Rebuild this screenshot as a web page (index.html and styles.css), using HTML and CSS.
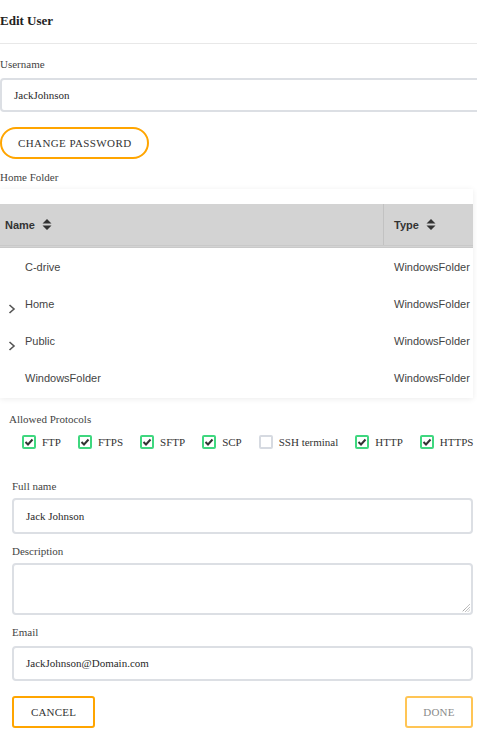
FILE: index.html
```html
<!DOCTYPE html>
<html>
<head>
<meta charset="utf-8">
<link rel="stylesheet" href="styles.css">
</head>
<body>
<div class="dialog">
  <h1 class="title">Edit User</h1>
  <div class="divider"></div>

  <div class="label label-top">Username</div>
  <div class="input input-wide">JackJohnson</div>

  <button class="btn-pill">CHANGE PASSWORD</button>

  <div class="label label-home">Home Folder</div>

  <div class="table-card">
    <div class="thead">
      <div class="th th-name">Name <svg class="sort" width="10" height="11" viewBox="0 0 10 11"><path d="M5 0 L9.5 4.5 L0.5 4.5 Z M5 11 L9.5 6.5 L0.5 6.5 Z" fill="#333"/></svg></div>
      <div class="th th-type">Type <svg class="sort" width="10" height="11" viewBox="0 0 10 11"><path d="M5 0 L9.5 4.5 L0.5 4.5 Z M5 11 L9.5 6.5 L0.5 6.5 Z" fill="#333"/></svg></div>
    </div>
    <div class="row">
      <div class="cell-name"><span class="chev-space"></span>C-drive</div>
      <div class="cell-type">WindowsFolder</div>
    </div>
    <div class="row">
      <div class="cell-name"><svg class="chev" width="8" height="10" viewBox="0 0 8 10"><path d="M1.5 1 L6 5 L1.5 9" fill="none" stroke="#555" stroke-width="1.6"/></svg>Home</div>
      <div class="cell-type">WindowsFolder</div>
    </div>
    <div class="row">
      <div class="cell-name"><svg class="chev" width="8" height="10" viewBox="0 0 8 10"><path d="M1.5 1 L6 5 L1.5 9" fill="none" stroke="#555" stroke-width="1.6"/></svg>Public</div>
      <div class="cell-type">WindowsFolder</div>
    </div>
    <div class="row">
      <div class="cell-name"><span class="chev-space"></span>WindowsFolder</div>
      <div class="cell-type">WindowsFolder</div>
    </div>
  </div>

  <div class="protocols">
    <div class="label">Allowed Protocols</div>
    <div class="proto-list">
      <label class="proto"><span class="cb on"><svg width="10" height="10" viewBox="0 0 10 10"><path d="M1.5 5 L4 7.5 L8.5 2.5" fill="none" stroke="#333" stroke-width="2"/></svg></span>FTP</label>
      <label class="proto"><span class="cb on"><svg width="10" height="10" viewBox="0 0 10 10"><path d="M1.5 5 L4 7.5 L8.5 2.5" fill="none" stroke="#333" stroke-width="2"/></svg></span>FTPS</label>
      <label class="proto"><span class="cb on"><svg width="10" height="10" viewBox="0 0 10 10"><path d="M1.5 5 L4 7.5 L8.5 2.5" fill="none" stroke="#333" stroke-width="2"/></svg></span>SFTP</label>
      <label class="proto"><span class="cb on"><svg width="10" height="10" viewBox="0 0 10 10"><path d="M1.5 5 L4 7.5 L8.5 2.5" fill="none" stroke="#333" stroke-width="2"/></svg></span>SCP</label>
      <label class="proto"><span class="cb"></span>SSH terminal</label>
      <label class="proto"><span class="cb on"><svg width="10" height="10" viewBox="0 0 10 10"><path d="M1.5 5 L4 7.5 L8.5 2.5" fill="none" stroke="#333" stroke-width="2"/></svg></span>HTTP</label>
      <label class="proto"><span class="cb on"><svg width="10" height="10" viewBox="0 0 10 10"><path d="M1.5 5 L4 7.5 L8.5 2.5" fill="none" stroke="#333" stroke-width="2"/></svg></span>HTTPS</label>
    </div>
  </div>

  <div class="details">
    <div class="label">Full name</div>
    <div class="input input-full">Jack Johnson</div>

    <div class="label label-gap">Description</div>
    <div class="textarea"><svg class="grip" width="8" height="8" viewBox="0 0 8 8"><path d="M7.5 0.5 L0.5 7.5 M7.5 3.5 L3.5 7.5 M7.5 6 L6 7.5" stroke="#666" stroke-width="0.8" stroke-dasharray="1 0.6"/></svg></div>

    <div class="label label-gap">Email</div>
    <div class="input input-email">JackJohnson@Domain.com</div>

    <div class="actions">
      <button class="btn btn-cancel">CANCEL</button>
      <button class="btn btn-done">DONE</button>
    </div>
  </div>
</div>
</body>
</html>
```
FILE: styles.css
```css
html, body {
  margin: 0;
  padding: 0;
  overflow: hidden;
  background: #fff;
}
body {
  font-family: "Liberation Serif", "Times New Roman", serif;
  font-size: 11px;
  color: #333;
  width: 477px;
}
.dialog {
  display: flex;
  flex-direction: column;
  align-items: flex-start;
}
.title {
  margin: 0;
  font-size: 13px;
  font-weight: bold;
  color: #222;
  height: 43px;
  line-height: 41px;
}
.divider {
  align-self: stretch;
  height: 1px;
  background: #e8e8e8;
}
.label {
  line-height: 14px;
  color: #444;
}
.label-top {
  margin-top: 13px;
}
.input {
  box-sizing: border-box;
  width: 461px;
  height: 35px;
  border: 2px solid #dcdfe4;
  border-radius: 4px;
  margin-top: 5px;
  padding-left: 12px;
  line-height: 31px;
  color: #2a2a2a;
}
.input-wide {
  width: 500px;
  height: 34px;
  line-height: 30px;
  margin-top: 7px;
}
.input-full {
  height: 36px;
  line-height: 32px;
}
.btn-pill {
  margin-top: 15px;
  box-sizing: border-box;
  width: 149px;
  height: 32px;
  border: 2px solid #ffa500;
  border-radius: 16px;
  background: #fff;
  font-family: "Liberation Serif", "Times New Roman", serif;
  font-size: 11px;
  color: #333;
  text-align: left;
  padding: 0 0 0 16px;
  letter-spacing: 0.4px;
}
.label-home {
  margin-top: 11px;
}
.table-card {
  margin-top: 5px;
  width: 473px;
  padding-top: 15px;
  padding-bottom: 2px;
  background: #fff;
  box-shadow: 0 1px 6px rgba(0, 0, 0, 0.08);
  font-family: "Liberation Sans", Arial, sans-serif;
  font-size: 11px;
  color: #333;
}
.thead {
  display: grid;
  grid-template-columns: 383px 1fr;
  height: 41px;
  background: #d3d3d3;
  border-bottom: 3px double #c9c9c9;
}
.th {
  display: flex;
  align-items: center;
  gap: 7px;
  font-weight: bold;
  color: #333;
}
.th-name {
  padding-left: 5px;
}
.th-type {
  border-left: 1px solid #c2c2c2;
  padding-left: 10px;
}
.sort {
  display: block;
  margin-top: -1px;
}
.row {
  display: grid;
  grid-template-columns: 394px 1fr;
  height: 37px;
  align-items: center;
  color: #444;
}
.cell-name {
  display: flex;
  align-items: center;
  padding-left: 8px;
}
.chev, .chev-space {
  display: block;
  width: 8px;
  height: 10px;
  margin-right: 9px;
  flex: none;
}
.chev {
  position: relative;
  top: 5px;
}
.protocols {
  margin-top: 14px;
  padding-left: 9px;
}
.proto-list {
  display: flex;
  margin-top: 9px;
  padding-left: 13px;
  gap: 17px;
}
.proto {
  display: flex;
  align-items: center;
  gap: 6px;
  line-height: 14px;
  color: #333;
  white-space: nowrap;
}
.cb {
  box-sizing: border-box;
  width: 14px;
  height: 14px;
  border: 2px solid #d6dae1;
  border-radius: 2px;
  display: flex;
  align-items: center;
  justify-content: center;
}
.cb.on {
  border-color: #3fd77f;
}
.cb svg {
  display: block;
}
.details {
  margin-top: 30px;
  padding-left: 12px;
  display: flex;
  flex-direction: column;
  align-items: flex-start;
}
.label-gap {
  margin-top: 10px;
}
.textarea {
  box-sizing: border-box;
  width: 461px;
  height: 52px;
  margin-top: 5px;
  border: 2px solid #dcdfe4;
  border-radius: 4px;
  display: flex;
  justify-content: flex-end;
  align-items: flex-end;
  padding: 0 1px 1px 0;
}
.grip {
  display: block;
}
.input-email {
  height: 35px;
  margin-top: 7px;
}
.actions {
  margin-top: 15px;
  width: 461px;
  display: flex;
  justify-content: space-between;
}
.btn {
  box-sizing: border-box;
  height: 32px;
  border-radius: 3px;
  background: #fff;
  font-family: "Liberation Serif", "Times New Roman", serif;
  font-size: 11px;
  padding: 0;
  letter-spacing: 0.2px;
}
.btn-cancel {
  width: 83px;
  border: 2px solid #ffa500;
  color: #333;
}
.btn-done {
  width: 68px;
  border: 2px solid #ffc555;
  color: #8a8a8a;
}
```
